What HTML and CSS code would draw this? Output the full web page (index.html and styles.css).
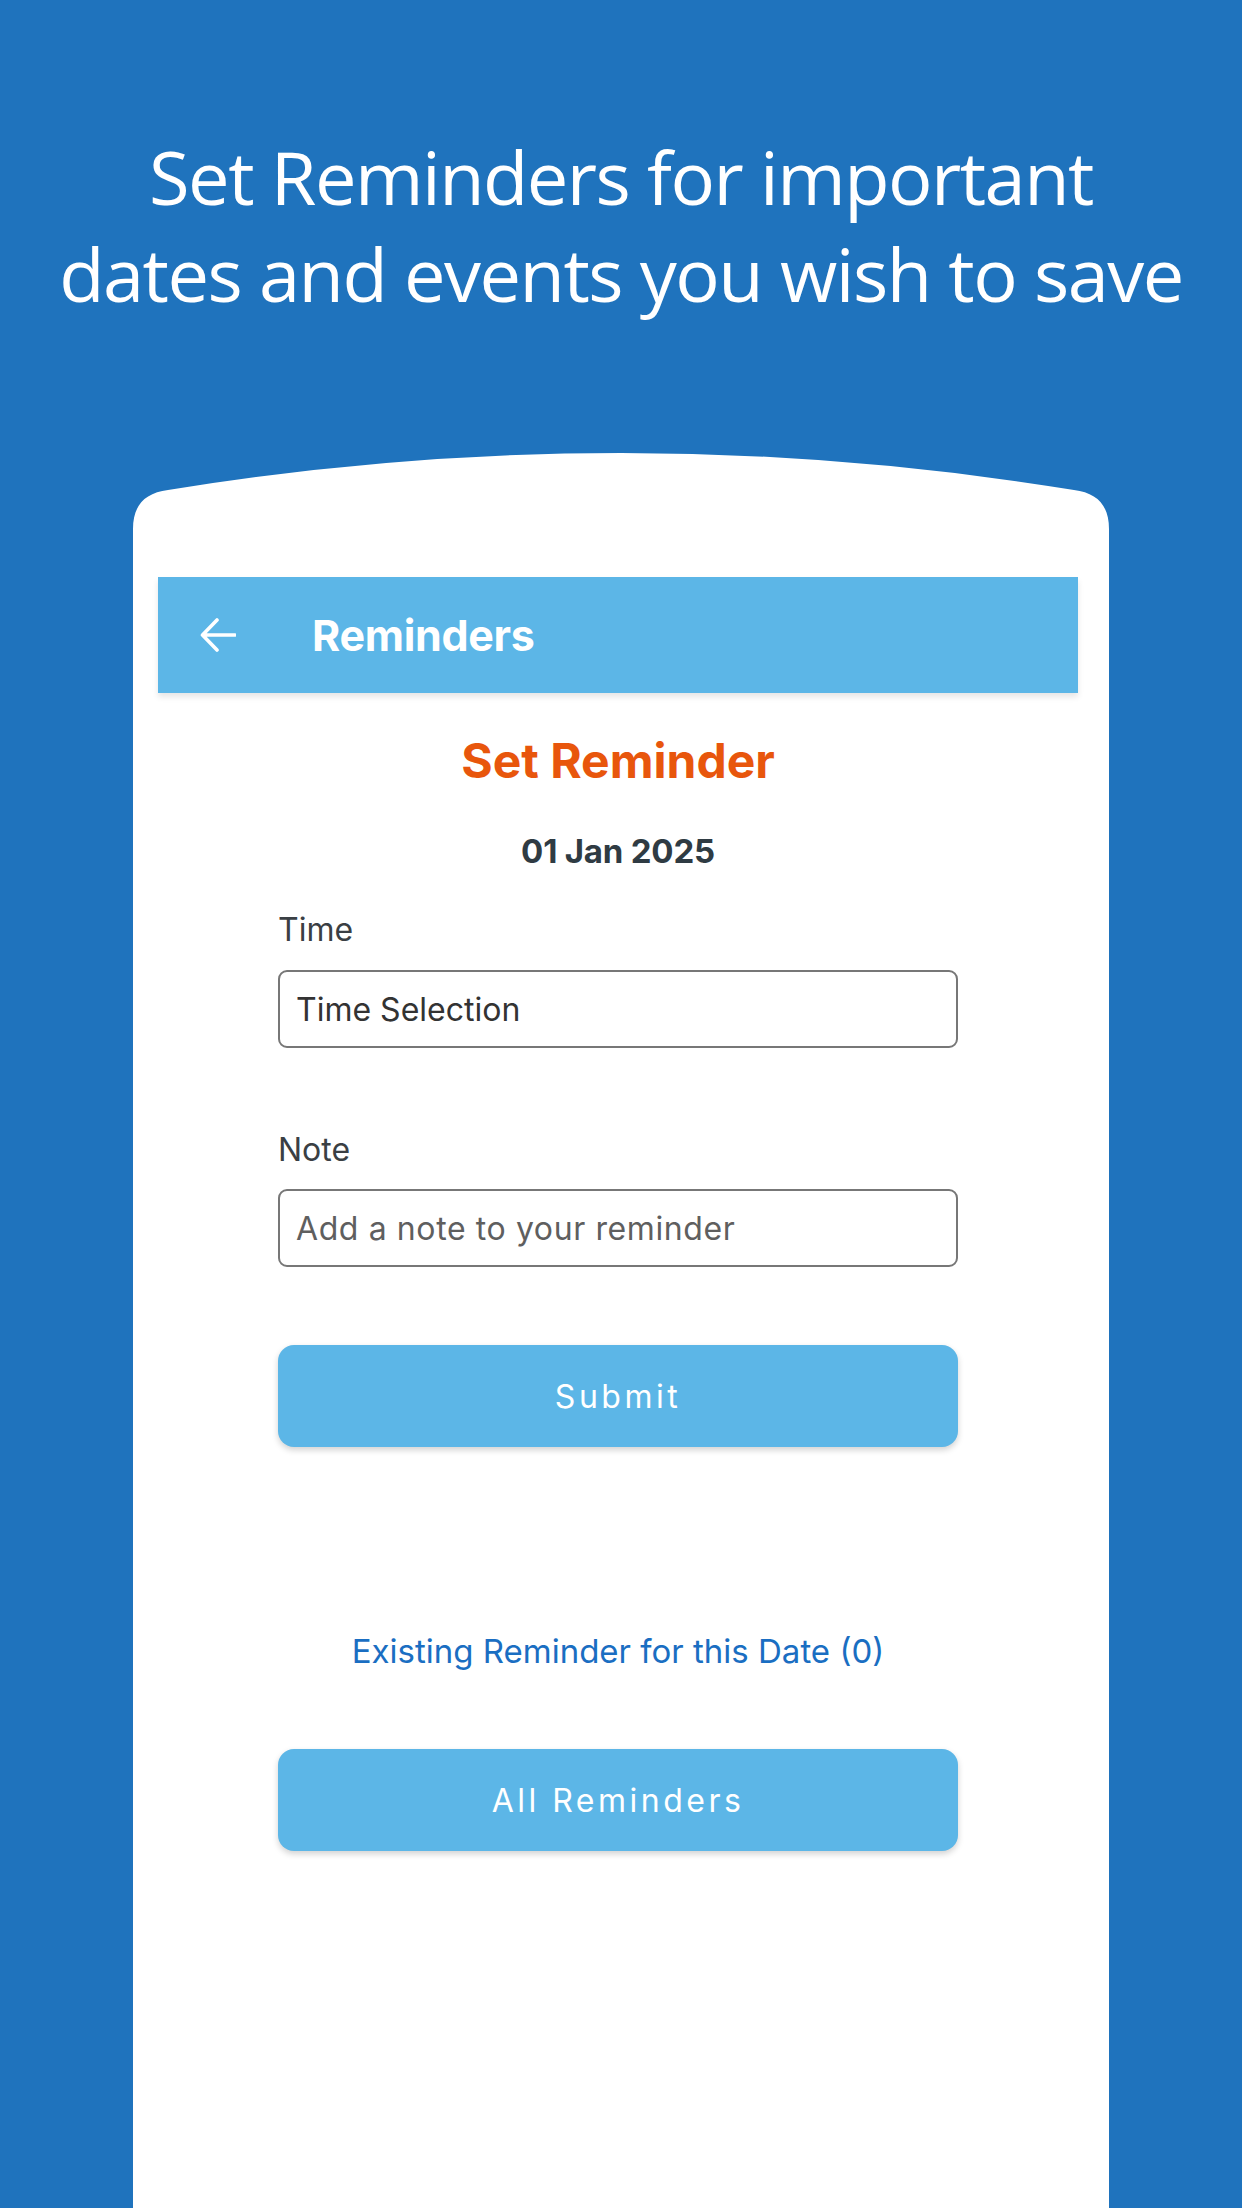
FILE: index.html
```html
<!DOCTYPE html>
<html lang="en">
<head>
<meta charset="utf-8">
<title>Set Reminders</title>
<link rel="stylesheet" href="styles.css">
</head>
<body>
<div class="page">
  <h1 class="headline">Set Reminders for important<br>dates and events you wish to save</h1>
  <div class="phone">
    <svg class="phone-cap" viewBox="0 0 976 124" width="976" height="124" aria-hidden="true">
      <path d="M0 124 L0 76 C0 52 12 40 35 37 Q488 -37 941 37 C964 40 976 52 976 76 L976 124 Z" fill="#ffffff"/>
    </svg>
    <div class="phone-body">
      <div class="screen">
        <header class="appbar">
          <svg class="back" viewBox="0 0 36 34" width="36" height="34" aria-hidden="true">
            <path d="M35 17 H3 M17 2 L2.5 17 L17 32" fill="none" stroke="#ffffff" stroke-width="3.6" stroke-linecap="round" stroke-linejoin="round"/>
          </svg>
          <span class="appbar-title">Reminders</span>
        </header>
        <main class="content">
          <h2 class="title">Set Reminder</h2>
          <div class="date">01 Jan 2025</div>
          <div class="form">
            <div class="label">Time</div>
            <div class="input">Time Selection</div>
            <div class="label note-label">Note</div>
            <div class="input placeholder">Add a note to your reminder</div>
            <div class="btn submit">Submit</div>
            <div class="existing">Existing Reminder for this Date (0)</div>
            <div class="btn all">All Reminders</div>
          </div>
        </main>
      </div>
    </div>
  </div>
</div>
</body>
</html>
```
FILE: styles.css
```css
html, body {
  margin: 0;
  padding: 0;
}
body {
  background: #1f73bd;
}
.page {
  width: 1242px;
  height: 2208px;
  overflow: hidden;
  display: flex;
  flex-direction: column;
  background: #1f73bd;
}
.headline {
  margin: 0;
  padding-top: 128px;
  font-family: "Open Sans", "Noto Sans", sans-serif;
  font-weight: 400;
  font-size: 74px;
  line-height: 97px;
  letter-spacing: -1.5px;
  color: #ffffff;
  text-align: center;
}
.phone {
  margin: 131px 0 0 133px;
  width: 976px;
  flex: 1;
  display: flex;
  flex-direction: column;
}
.phone-cap {
  display: block;
}
.phone-body {
  flex: 1;
  background: #ffffff;
  padding: 0 31px 0 25px;
  display: flex;
  flex-direction: column;
}
.screen {
  flex: 1;
  background: #ffffff;
  font-family: "Inter", "Roboto", sans-serif;
}
.appbar {
  height: 116px;
  background: #5cb6e7;
  display: flex;
  align-items: center;
  padding-left: 42px;
  box-shadow: 0 4px 6px rgba(0, 0, 0, 0.10);
}
.back {
  display: block;
}
.appbar-title {
  margin-left: 76px;
  font-size: 43px;
  font-weight: 700;
  color: #ffffff;
  letter-spacing: -0.3px;
}
.content {
  padding-top: 40px;
}
.title {
  margin: 0;
  text-align: center;
  font-size: 48px;
  line-height: 56px;
  font-weight: 700;
  color: #e8560c;
  letter-spacing: 0;
}
.date {
  margin-top: 42px;
  text-align: center;
  font-size: 33px;
  line-height: 40px;
  font-weight: 700;
  color: #2f3b43;
  letter-spacing: -0.2px;
}
.form {
  width: 680px;
  margin: 39px auto 0;
  display: flex;
  flex-direction: column;
}
.label {
  font-size: 32px;
  line-height: 40px;
  color: #3a3f44;
}
.note-label {
  margin-top: 82px;
}
.input {
  margin-top: 20px;
  height: 78px;
  box-sizing: border-box;
  border: 2.5px solid #777777;
  border-radius: 9px;
  padding-left: 16px;
  display: flex;
  align-items: center;
  font-size: 32px;
  color: #333333;
}
.placeholder {
  margin-top: 19px;
  color: #5f5f5f;
  letter-spacing: 0.6px;
}
.btn {
  height: 102px;
  border-radius: 16px;
  background: #5cb6e7;
  color: #ffffff;
  display: flex;
  align-items: center;
  justify-content: center;
  font-size: 32px;
  letter-spacing: 3.5px;
  box-shadow: 0 3px 6px rgba(0, 0, 0, 0.18);
}
.submit {
  margin-top: 78px;
}
.existing {
  margin-top: 184px;
  text-align: center;
  font-size: 33px;
  line-height: 40px;
  color: #1a6ec2;
}
.all {
  margin-top: 78px;
}
```
